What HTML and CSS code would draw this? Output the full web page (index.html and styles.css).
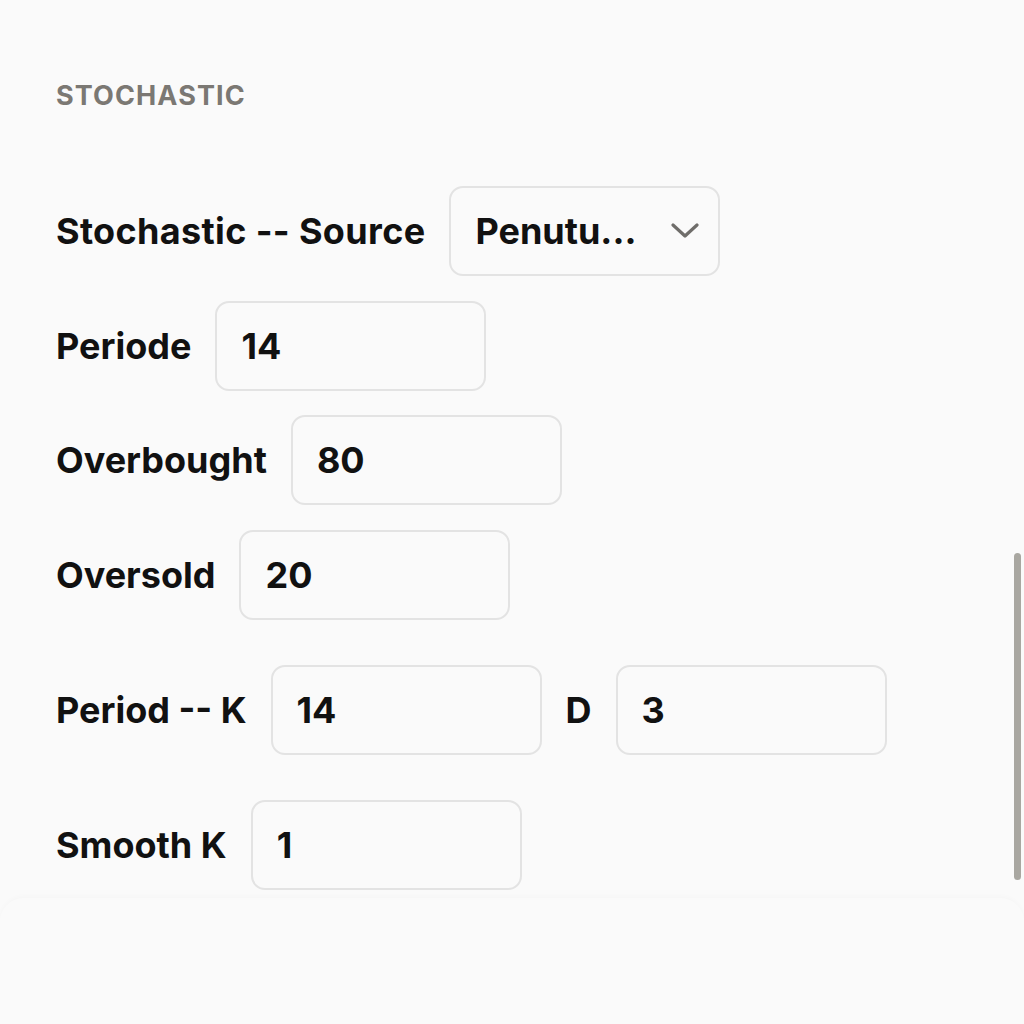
FILE: index.html
```html
<!DOCTYPE html>
<html lang="en">
<head>
    <meta charset="UTF-8">
    <meta name="viewport" content="width=device-width, initial-scale=1.0">
    <title>Stochastic settings</title>
    <link rel="stylesheet" href="styles.css">
</head>
<body>
    <div class="panel">
        <h2 class="section-title">STOCHASTIC</h2>

        <div class="field-group">
            <div class="field-row">
                <label class="wide">Stochastic -- Source</label>
                <div class="select-box">
                    <span>Penutu...</span>
                    <svg class="chevron" width="28" height="16" viewBox="0 0 28 16">
                        <path d="M2 2 L14 13 L26 2" fill="none" stroke="#6f6d6a" stroke-width="3.2" stroke-linecap="round" stroke-linejoin="round"/>
                    </svg>
                </div>
            </div>
            <div class="field-row">
                <label>Periode</label>
                <input type="text" value="14">
            </div>
            <div class="field-row">
                <label>Overbought</label>
                <input type="text" value="80">
            </div>
            <div class="field-row">
                <label>Oversold</label>
                <input type="text" value="20">
            </div>
        </div>

        <div class="field-row spaced">
            <label>Period -- K</label>
            <input type="text" value="14">
            <label>D</label>
            <input type="text" value="3">
        </div>

        <div class="field-row spaced">
            <label>Smooth K</label>
            <input type="text" value="1">
        </div>
    </div>

    <div class="sheet-edge"></div>
    <div class="scrollbar"></div>
</body>
</html>
```

FILE: styles.css
```css
body {
    margin: 0;
    background-color: #fafafa;
    font-family: Inter, "Liberation Sans", sans-serif;
    color: #111111;
}
.panel {
    padding: 80px 0 0 56px;
}
.section-title {
    margin: 0 0 74px 0;
    font-size: 27px;
    line-height: 32px;
    font-weight: 700;
    letter-spacing: 1.1px;
    color: #7b7873;
}
.field-group {
    display: flex;
    flex-direction: column;
    gap: 24.5px;
}
.field-row {
    display: flex;
    align-items: center;
    gap: 24px;
}
.field-row.spaced {
    margin-top: 45px;
}
label {
    font-size: 36px;
    font-weight: 700;
    white-space: nowrap;
}
label.wide {
    letter-spacing: 0.35px;
}
input, .select-box {
    box-sizing: border-box;
    width: 271px;
    height: 90px;
    padding: 0 24px;
    border: 2px solid #e3e3e3;
    border-radius: 14px;
    background: #fafafa;
    font-family: inherit;
    font-size: 36px;
    font-weight: 700;
    color: #111111;
    outline: none;
}
.select-box {
    display: flex;
    align-items: center;
    justify-content: space-between;
    padding-right: 19px;
}
.chevron {
    display: block;
}
.sheet-edge {
    margin: 8px 0 0 0;
    height: 24px;
    border-radius: 40px 40px 0 0;
    box-shadow: 0 -2px 5px rgba(0,0,0,0.018);
}
.scrollbar {
    position: fixed;
    top: 553px;
    right: 3px;
    width: 7px;
    height: 327px;
    border-radius: 4px;
    background: #a9a7a1;
}
```
